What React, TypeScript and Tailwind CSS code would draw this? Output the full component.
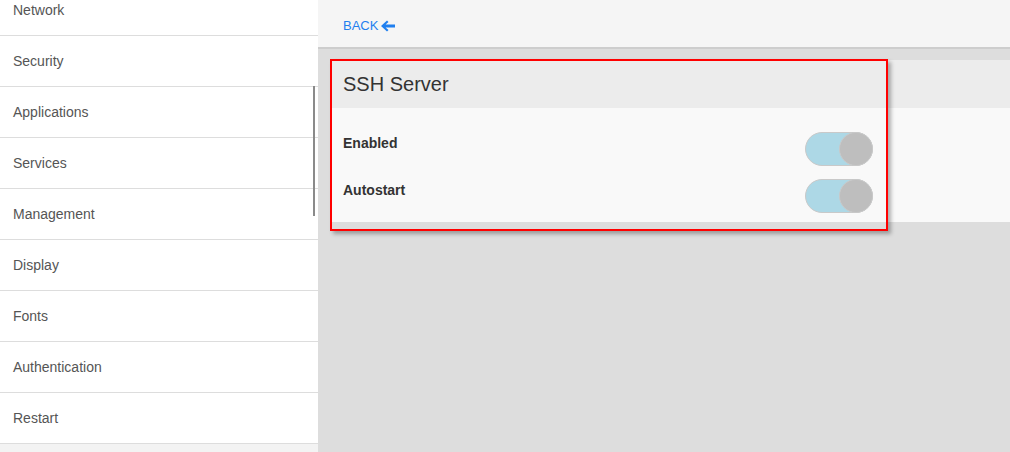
import React from "react";

const items = [
  "Network",
  "Security",
  "Applications",
  "Services",
  "Management",
  "Display",
  "Fonts",
  "Authentication",
  "Restart",
];

function Toggle() {
  return (
    <div className="relative h-[34px] w-[68px] rounded-full border border-[#c9c9c9] bg-[#add8e6]">
      <div className="absolute right-[-1px] top-[-1px] h-[34px] w-[34px] rounded-full border border-[#c9c9c9] bg-[#bebebe]" />
    </div>
  );
}

export default function App() {
  return (
    <div
      className="flex h-[452px] w-[1010px] overflow-hidden bg-[#dddddd]"
      style={{ fontFamily: '"Liberation Sans", Arial, sans-serif' }}
    >
      <aside className="relative h-full w-[318px] shrink-0 overflow-hidden bg-[#f3f3f3]">
        <ul className="mt-[-15px]">
          {items.map((t) => (
            <li
              key={t}
              className="flex h-[51px] items-center border-b border-[#dddddd] bg-white pl-[13px] text-[14px] text-[#555555]"
            >
              {t}
            </li>
          ))}
        </ul>
        <div className="absolute left-[313px] top-[86px] h-[130px] w-[2px] bg-[#8a8a8a]" />
      </aside>

      <main className="relative flex min-w-0 flex-1 flex-col">
        <header className="flex h-[49px] items-center border-b-2 border-[#cdcdcd] bg-[#f5f5f5] pl-[25px] pt-[4px]">
          <button className="flex items-center gap-[3px] text-[13px] text-[#1f7fef]">
            BACK
            <svg width="14" height="12" viewBox="0 0 14 12" fill="#1f7fef">
              <path d="M0 6 L6 0.5 L7.5 2 L4.6 4.6 H14 V7.4 H4.6 L7.5 10 L6 11.5 Z" />
            </svg>
          </button>
        </header>

        <section className="ml-[12px] mt-[11px] flex flex-col">
          <div className="flex h-[48px] items-center bg-[#ececec] pl-[13px] text-[20px] text-[#333333]">
            SSH Server
          </div>
          <div className="flex flex-col gap-[13px] bg-[#f9f9f9] pb-[9px] pl-[13px] pt-[24px]">
            <div className="flex w-[530px] items-start justify-between">
              <span className="mt-[1px] text-[14px] font-bold leading-5 text-[#333333]">Enabled</span>
              <Toggle />
            </div>
            <div className="flex w-[530px] items-start justify-between">
              <span className="mt-[1px] text-[14px] font-bold leading-5 text-[#333333]">Autostart</span>
              <Toggle />
            </div>
          </div>
        </section>

        <div className="pointer-events-none absolute left-[12px] top-[59px] h-[172px] w-[558px] border-2 border-[#ff0000] shadow-[3px_3px_4px_rgba(0,0,0,0.3)]" />
      </main>
    </div>
  );
}
